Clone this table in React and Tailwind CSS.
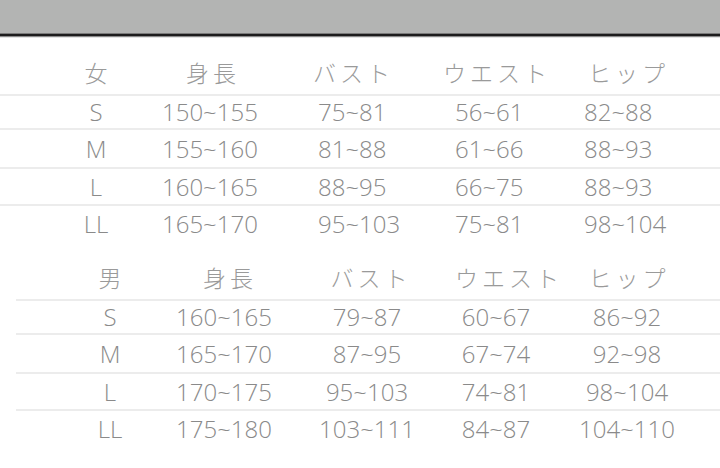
const women = [
  { size: 'S', h: '150~155', b: '75~81', w: '56~61', hip: '82~88', rh: 'h-[32px]' },
  { size: 'M', h: '155~160', b: '81~88', w: '61~66', hip: '88~93', rh: 'h-[37px]' },
  { size: 'L', h: '160~165', b: '88~95', w: '66~75', hip: '88~93', rh: 'h-[35px]' },
  { size: 'LL', h: '165~170', b: '95~103', w: '75~81', hip: '98~104', rh: 'h-[36px]' },
];

const men = [
  { size: 'S', h: '160~165', b: '79~87', w: '60~67', hip: '86~92', rh: 'h-[32px]' },
  { size: 'M', h: '165~170', b: '87~95', w: '67~74', hip: '92~98', rh: 'h-[37px]' },
  { size: 'L', h: '170~175', b: '95~103', w: '74~81', hip: '98~104', rh: 'h-[35px]' },
  { size: 'LL', h: '175~180', b: '103~111', w: '84~87', hip: '104~110', rh: 'h-[36px]' },
];

const Line = () => <div className="h-[2px] bg-[#ececec]" />;

const App = () => {
  return (
    <div
      className="w-[720px] h-[468px] bg-white overflow-hidden text-[#8a8a8a]"
      style={{ fontFamily: '"Open Sans", "Noto Sans CJK JP", sans-serif' }}
    >
      {/* top bar */}
      <div className="h-[33px] bg-[#b3b4b3]" />
      <div className="h-[1px] bg-[#7a7a7a]" />
      <div className="h-[2px] bg-[#1c1c1c]" />
      <div className="h-[1px] bg-[#8a8a8a]" />
      <div className="h-[1px] bg-[#e4e4e4]" />

      {/* women */}
      <div className="flex items-center h-[56px] pt-[14px] text-[23px] font-light tracking-[4px] text-[#9a9a9a] whitespace-nowrap">
        <div className="ml-[56px] w-[80px] text-center pl-[4px]">女</div>
        <div className="w-[156px] pl-[50px]">身長</div>
        <div className="w-[137px] pl-[21px]">バスト</div>
        <div className="w-[129px] pl-[14px]">ウエスト</div>
        <div className="flex-1 pl-[30px]">ヒップ</div>
      </div>
      <Line />
      {women.map((r, i) => (
        <div key={r.size}>
          <div className={`flex items-center ${r.rh} text-[24px] font-light leading-none`}>
            <div className="ml-[56px] w-[80px] text-center">{r.size}</div>
            <div className="w-[156px] pl-[26px]">{r.h}</div>
            <div className="w-[137px] pl-[26px]">{r.b}</div>
            <div className="w-[129px] pl-[26px]">{r.w}</div>
            <div className="flex-1 pl-[26px]">{r.hip}</div>
          </div>
          {i < women.length - 1 && <Line />}
        </div>
      ))}

      {/* men */}
      <div className="ml-[16px]">
        <div className="flex items-center h-[57px] pt-[15px] text-[23px] font-light tracking-[4px] text-[#9a9a9a] whitespace-nowrap">
          <div className="ml-[44px] w-[100px] text-center pl-[4px]">男</div>
          <div className="w-[128px] text-center pl-[12px]">身長</div>
          <div className="w-[158px] text-center pl-[8px]">バスト</div>
          <div className="w-[100px] pl-[9px]">ウエスト</div>
          <div className="w-[162px] text-center pl-[4px]">ヒップ</div>
        </div>
        <Line />
        {men.map((r, i) => (
          <div key={r.size}>
            <div className={`flex items-center ${r.rh} text-[24px] font-light leading-none`}>
              <div className="ml-[44px] w-[100px] text-center">{r.size}</div>
              <div className="w-[128px] text-center">{r.h}</div>
              <div className="w-[158px] text-center">{r.b}</div>
              <div className="w-[100px] text-center">{r.w}</div>
              <div className="w-[162px] text-center">{r.hip}</div>
            </div>
            {i < men.length - 1 && <Line />}
          </div>
        ))}
      </div>
    </div>
  );
};

export default App;
